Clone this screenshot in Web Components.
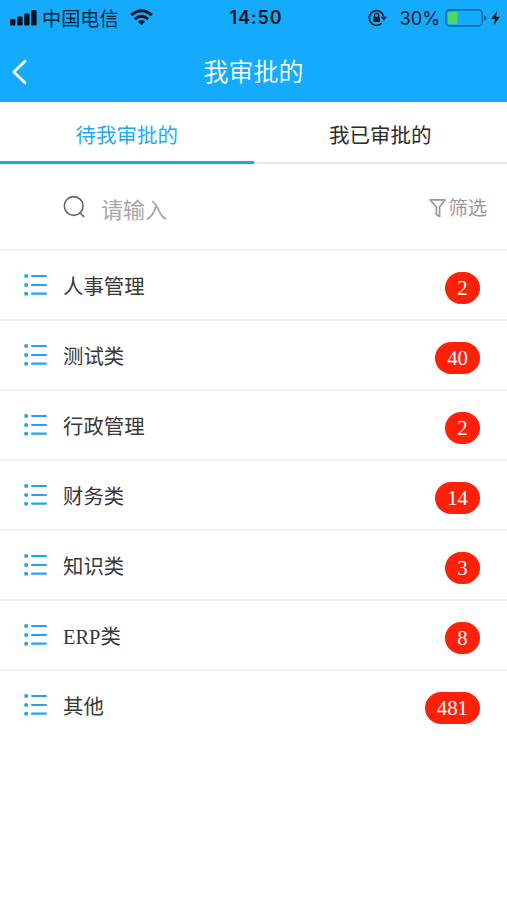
<!DOCTYPE html>
<html lang="zh-CN">
<head>
<meta charset="utf-8">
<meta name="viewport" content="width=device-width, initial-scale=1">
<title>我审批的</title>
<style>
    body {
        margin: 0;
        background: #fff;
        color: #333;
        font-family: "Liberation Serif", "Noto Sans CJK SC", sans-serif;
    }
</style>
</head>
<body>
<approval-app>
    <status-bar carrier="中国电信" time="14:50" battery="30"></status-bar>
    <nav-bar>我审批的</nav-bar>
    <tab-bar>
        <tab-item active>待我审批的</tab-item>
        <tab-item>我已审批的</tab-item>
    </tab-bar>
    <search-bar placeholder="请输入">筛选</search-bar>
    <category-row count="2">人事管理</category-row>
    <category-row count="40">测试类</category-row>
    <category-row count="2">行政管理</category-row>
    <category-row count="14">财务类</category-row>
    <category-row count="3">知识类</category-row>
    <category-row count="8">ERP类</category-row>
    <category-row count="481">其他</category-row>
</approval-app>

<script>
const appTemplate = `
<style>
    :host {
        display: flex;
        flex-direction: column;
        min-height: 100vh;
        background: #fff;
    }
</style>
<slot></slot>
`;

const statusTemplate = `
<style>
    :host {
        display: grid;
        grid-template-columns: 1fr auto 1fr;
        align-items: center;
        height: 34px;
        padding: 0 7px 0 10px;
        box-sizing: border-box;
        background: #14abff;
        color: #06202e;
        font-family: Inter, "Noto Sans CJK SC", sans-serif;
        font-size: 18px;
        line-height: 34px;
    }

    svg { display: block; flex: none; }

    .left, .right { display: flex; align-items: center; height: 34px; }
    .right { justify-content: flex-end; }

    #carrier { margin: 2px 11px 0 5px; font-size: 19.2px; }
    #time { margin: 1px 0 0 2px; font-weight: 600; font-size: 18px; letter-spacing: 0.9px; color: #04141d; }
    #battery { margin: 1px 5px 0 12px; font-size: 18.2px; }
    .bolt { margin-left: 4px; }
</style>
<div class="left">
    <svg width="27" height="17" viewBox="0 0 27 17" fill="#03131c">
        <rect x="0" y="10" width="5.4" height="6.5" rx="1.3"/>
        <rect x="7.2" y="7.5" width="5.4" height="9" rx="1.3"/>
        <rect x="14.2" y="4.5" width="5.4" height="12" rx="1.3"/>
        <rect x="21.2" y="1" width="5.4" height="15.5" rx="1.3"/>
    </svg>
    <span id="carrier"></span>
    <svg width="23" height="17" viewBox="0 0 23 17" fill="none" stroke="#03131c" stroke-width="3">
        <path d="M1.2 6.2Q11.5 -2.6 21.8 6.2"/>
        <path d="M4.9 10.1Q11.5 4.5 18.1 10.1"/>
        <path d="M11.5 16.3L7.8 12.6Q11.5 9.8 15.2 12.6Z" fill="#03131c" stroke="none"/>
    </svg>
</div>
<span id="time"></span>
<div class="right">
    <svg width="19" height="18" viewBox="0 0 19 18" fill="none" stroke="#06202e" stroke-width="1.7">
        <path d="M15.8 7.8A7.3 7.3 0 1 0 13.7 14.2"/>
        <path d="M12.8 7.8H18.8L15.8 11.8Z" fill="#06202e" stroke="none"/>
        <rect x="5.2" y="7.7" width="6.8" height="5.4" rx=".8" fill="#06202e" stroke="none"/>
        <path d="M6.6 8V6.4A2 2 0 0 1 10.6 6.4V8" stroke-width="1.3"/>
    </svg>
    <span id="battery"></span>
    <svg width="42" height="18" viewBox="0 0 42 18" fill="none">
        <rect x=".9" y=".9" width="36.4" height="16" rx="4" stroke="#0d6d9e" stroke-width="1.6"/>
        <rect id="charge" x="3" y="3" height="12" rx="1.5" fill="#4cd964"/>
        <path d="M39 6V12Q41.5 11.5 41.5 9T39 6Z" fill="#0d6d9e"/>
    </svg>
    <svg class="bolt" width="9" height="16" viewBox="0 0 9 16" fill="#03131c">
        <path d="M6.2 .8L.2 9H4L2.8 15.2L8.8 6.7H5Z"/>
    </svg>
</div>
`;

const navTemplate = `
<style>
    :host {
        display: grid;
        grid-template-columns: 48px 1fr 48px;
        align-items: center;
        height: 68px;
        background: #14abff;
        color: #fff;
    }

    svg { display: block; margin: 7px 0 0 11px; }

    h1 {
        margin: 9px 0 0;
        text-align: center;
        font-size: 25px;
        font-weight: 350;
        line-height: 36px;
    }
</style>
<svg width="17" height="26" viewBox="0 0 17 26" fill="none" stroke="#fff" stroke-width="2.7" stroke-linecap="round" stroke-linejoin="round">
    <path d="M14 2.3L2.8 13L14 23.7"/>
</svg>
<h1><slot></slot></h1>
`;

const tabsTemplate = `
<style>
    :host {
        display: flex;
        height: 62px;
    }
</style>
<slot></slot>
`;

const tabTemplate = `
<style>
    :host {
        display: block;
        flex: 1;
        box-sizing: border-box;
        height: 62px;
        border-bottom: 2px solid #e6e6e6;
        text-align: center;
        font-size: 20.5px;
        line-height: 68px;
        color: #2b2b2b;
        cursor: pointer;
    }

    :host([active]) {
        border-bottom: 3px solid #18a6f5;
        color: #24aaf5;
    }
</style>
<slot></slot>
`;

const searchTemplate = `
<style>
    :host {
        display: flex;
        align-items: center;
        box-sizing: border-box;
        height: 87.4px;
        padding: 0 20px 0 63px;
        border-bottom: 2px solid #f0f0f0;
        color: #a6a6a6;
    }

    svg { display: block; flex: none; }

    #hint {
        flex: 1;
        margin: 8px 0 0 15px;
        font-size: 22px;
        line-height: 32px;
    }

    #filter {
        display: flex;
        align-items: center;
        margin-top: 4px;
        font-size: 19.3px;
        line-height: 28px;
        color: #999;
    }

    #filter svg { margin-top: -1px; }
</style>
<svg width="23" height="23" viewBox="0 0 23 23" fill="none" stroke="#666" stroke-width="1.6" stroke-linecap="round">
    <circle cx="10.7" cy="11" r="9.4"/>
    <path d="M16.9 18L20.6 21.4"/>
</svg>
<span id="hint"></span>
<div id="filter">
    <svg width="19" height="20" viewBox="0 0 19 20" fill="none" stroke="#999" stroke-width="1.7" stroke-linejoin="round">
        <path d="M1 1.8H16L10.6 9V18.5L7.4 16.4V9Z"/>
    </svg>
    <slot></slot>
</div>
`;

const rowTemplate = `
<style>
    :host {
        display: flex;
        align-items: center;
        box-sizing: border-box;
        height: 69.95px;
        padding: 0 27px 0 23px;
        border-bottom: 2px solid #f0f0f0;
        font-size: 20.4px;
    }

    :host(:last-of-type) { border-bottom-color: transparent; }

    svg { display: block; flex: none; }

    #label {
        flex: 1;
        margin: 4px 0 0 15px;
        line-height: 30px;
        color: #383838;
    }

    #badge {
        margin-top: 6px;
        min-width: 35px;
        box-sizing: border-box;
        padding: 0 12px;
        border-radius: 16px;
        background: #ff200a;
        color: #fff;
        text-align: center;
        font-size: 20.8px;
        line-height: 32px;
    }
</style>
<svg width="25" height="24" viewBox="0 0 25 24" fill="#20a5f2">
    <circle cx="3.1" cy="3" r="2"/>
    <circle cx="3.1" cy="12" r="2"/>
    <circle cx="3.1" cy="20.7" r="2"/>
    <rect x="8" y="1.9" width="16" height="2.2" rx="1"/>
    <rect x="8" y="10.9" width="16" height="2.2" rx="1"/>
    <rect x="8" y="19.6" width="16" height="2.2" rx="1"/>
</svg>
<span id="label"><slot></slot></span>
<span id="badge"></span>
`;

class BaseElement extends HTMLElement {
    constructor(template) {
        super();
        this.attachShadow({ mode: 'open' });
        this.shadowRoot.innerHTML = template;
    }

    _setText(selector, text) {
        this.shadowRoot.querySelector(selector).textContent = text;
    }
}

class ApprovalApp extends BaseElement {
    constructor() { super(appTemplate); }
}

class StatusBar extends BaseElement {
    constructor() { super(statusTemplate); }

    connectedCallback() {
        const level = Number(this.getAttribute('battery'));
        this._setText('#carrier', this.getAttribute('carrier'));
        this._setText('#time', this.getAttribute('time'));
        this._setText('#battery', level + '%');
        this.shadowRoot.querySelector('#charge').setAttribute('width', 32 * level / 100);
    }
}

class NavBar extends BaseElement {
    constructor() { super(navTemplate); }
}

class TabBar extends BaseElement {
    constructor() {
        super(tabsTemplate);
        this.addEventListener('click', this._select.bind(this));
    }

    _select(event) {
        const tab = event.target.closest('tab-item');
        if (!tab) return;
        this.querySelectorAll('tab-item').forEach(item => {
            item.toggleAttribute('active', item === tab);
        });
    }
}

class TabItem extends BaseElement {
    constructor() { super(tabTemplate); }
}

class SearchBar extends BaseElement {
    constructor() { super(searchTemplate); }

    connectedCallback() {
        this._setText('#hint', this.getAttribute('placeholder'));
    }
}

class CategoryRow extends BaseElement {
    constructor() { super(rowTemplate); }

    connectedCallback() {
        this._setText('#badge', this.getAttribute('count'));
    }
}

customElements.define('approval-app', ApprovalApp);
customElements.define('status-bar', StatusBar);
customElements.define('nav-bar', NavBar);
customElements.define('tab-bar', TabBar);
customElements.define('tab-item', TabItem);
customElements.define('search-bar', SearchBar);
customElements.define('category-row', CategoryRow);
</script>
</body>
</html>
